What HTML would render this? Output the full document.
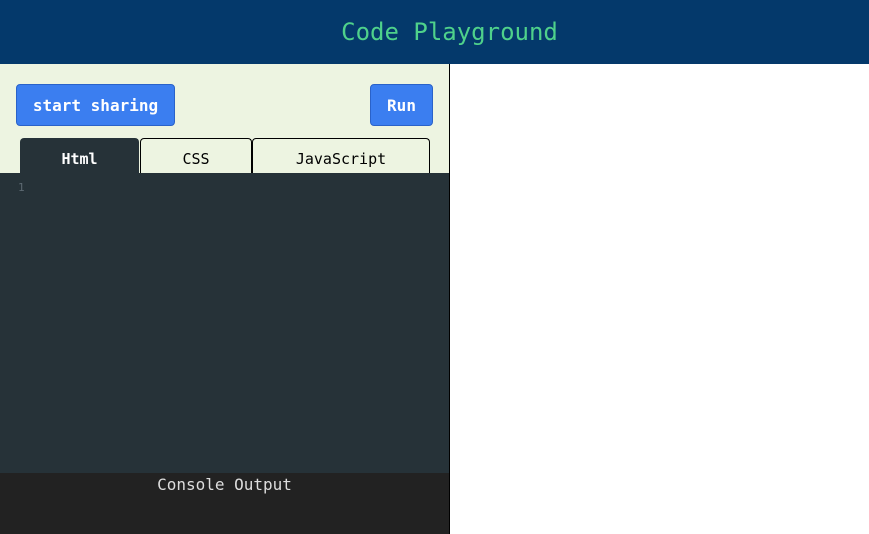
<!DOCTYPE html><html><head><style>
body{margin:0;width:869px;height:534px;overflow:hidden;font-family:"DejaVu Sans Mono","Liberation Mono",monospace;position:relative;background:#fff}
.h{position:absolute;left:0;top:0;width:869px;height:64px;background:#04396b;color:#4fd18b;font-size:24px;text-align:center;line-height:64px;padding-left:30px;box-sizing:border-box}
.l{position:absolute;left:0;top:64px;width:449px;height:470px;background:#edf4e1;border-right:1px solid #000}
.b{position:absolute;top:20px;height:42px;background:#3b7ef0;border:1px solid #2a62c9;border-radius:4px;color:#fff;font-weight:bold;font-size:16px;line-height:42px;text-align:center;box-sizing:border-box}
.t{position:absolute;top:74px;height:35px;box-sizing:border-box;border:1px solid #000;border-bottom:none;border-radius:4px 4px 0 0;font-size:15px;text-align:center;line-height:40px;background:#edf4e1}
.e{position:absolute;left:0;top:109px;width:449px;height:300px;background:#263238;color:#5d6a72;font-size:11px}
.c{position:absolute;left:0;top:409px;width:449px;height:61px;background:#222;color:#ddd;font-size:16px;text-align:center;line-height:24px}
</style></head><body>
<div class="h">Code Playground</div>
<div class="l">
<div class="b" style="left:16px;width:159px">start sharing</div>
<div class="b" style="left:370px;width:63px">Run</div>
<div class="t" style="left:20px;width:119px;background:#263238;color:#fff;border-color:#263238;font-weight:bold">Html</div>
<div class="t" style="left:140px;width:112px">CSS</div>
<div class="t" style="left:252px;width:178px">JavaScript</div>
<div class="e"><div style="position:absolute;left:18px;top:8px">1</div></div>
<div class="c">Console Output</div>
</div>
</body></html>
